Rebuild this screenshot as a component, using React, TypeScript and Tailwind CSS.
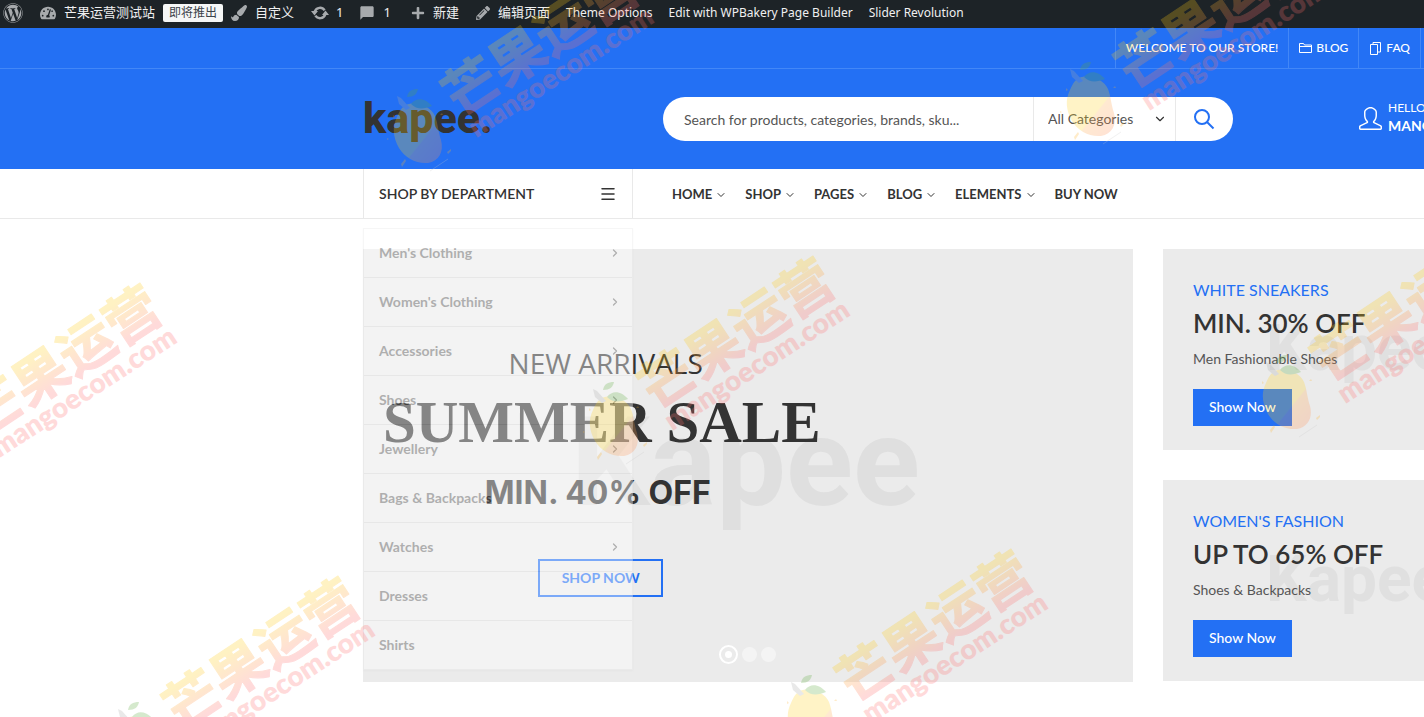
import {
  FaWordpress,
  FaTachometerAlt,
  FaPaintBrush,
  FaPlus,
  FaPencilAlt,
} from "react-icons/fa";
import { MdModeComment } from "react-icons/md";
import { SlUser } from "react-icons/sl";
import { ChevronDown, ChevronRight, Menu } from "lucide-react";

const departments = [
  { name: "Men's Clothing", hasChildren: true },
  { name: "Women's Clothing", hasChildren: true },
  { name: "Accessories", hasChildren: true },
  { name: "Shoes", hasChildren: true },
  { name: "Jewellery", hasChildren: true },
  { name: "Bags & Backpacks", hasChildren: false },
  { name: "Watches", hasChildren: true },
  { name: "Dresses", hasChildren: false },
  { name: "Shirts", hasChildren: false },
];

const navItems = [
  { name: "HOME", hasChildren: true },
  { name: "SHOP", hasChildren: true },
  { name: "PAGES", hasChildren: true },
  { name: "BLOG", hasChildren: true },
  { name: "ELEMENTS", hasChildren: true },
  { name: "BUY NOW", hasChildren: false },
];

const banners = [
  {
    label: "WHITE SNEAKERS",
    title: "MIN. 30% OFF",
    text: "Men Fashionable Shoes",
  },
  {
    label: "WOMEN'S FASHION",
    title: "UP TO 65% OFF",
    text: "Shoes & Backpacks",
  },
];

const stamps = [
  [-196, -293],
  [477, -320],
  [-673, 27],
  [0, 0],
  [673, -27],
  [-475, 320],
  [198, 293],
];

const UpdateIcon = () => (
  <svg
    viewBox="0 0 20 20"
    className="size-5 text-[#a7aaad]"
    aria-hidden="true"
  >
    <path
      d="M4.800 8.500a5.500 5.500 0 0 1 9.800-1.200M15.200 11.500a5.500 5.500 0 0 1-9.800 1.200"
      fill="none"
      stroke="currentColor"
      strokeWidth="2.400"
    />
    <path d="M1 8h7l-3.500 4.500zM19 12h-7l3.500-4.500z" fill="currentColor" />
  </svg>
);

const AdminBar = () => {
  return (
    <nav
      aria-label="Admin"
      className="flex h-7 items-center whitespace-nowrap bg-[#1d2327] pb-[3px] font-['Noto_Sans','Noto_Sans_CJK_SC',sans-serif] text-[13px] text-[#f0f0f1]"
    >
      <a href="#" aria-label="WordPress" className="ml-[3px] text-[#a7aaad]">
        <FaWordpress className="size-5" />
      </a>
      <a href="#" className="ml-[17px] flex items-center gap-2">
        <FaTachometerAlt className="size-4 text-[#a7aaad]" />
        芒果运营测试站
      </a>
      <a
        href="#"
        className="ml-2 flex h-[18px] items-center rounded-xs bg-[#f6f7f7] px-1.5 text-xs text-[#3c434a]"
      >
        即将推出
      </a>
      <a href="#" className="ml-2 flex items-center gap-2">
        <FaPaintBrush className="size-4 text-[#a7aaad]" />
        自定义
      </a>
      <a href="#" className="ml-4 flex items-center gap-1.5">
        <UpdateIcon />1
      </a>
      <a href="#" className="ml-4 flex items-center gap-2">
        <MdModeComment className="size-4 -scale-x-100 text-[#a7aaad]" />1
      </a>
      <a href="#" className="ml-5 flex items-center gap-2">
        <FaPlus className="size-3.5 text-[#a7aaad]" />
        新建
      </a>
      <a href="#" className="ml-[17px] flex items-center gap-2">
        <FaPencilAlt className="size-3.5 text-[#a7aaad]" />
        编辑页面
      </a>
      <div className="ml-4 flex gap-4 text-xs">
        <a href="#">Theme Options</a>
        <a href="#">Edit with WPBakery Page Builder</a>
        <a href="#">Slider Revolution</a>
      </div>
    </nav>
  );
};

const FolderIcon = () => (
  <svg
    viewBox="0 0 13 13"
    className="size-[13px]"
    fill="none"
    stroke="currentColor"
    aria-hidden="true"
  >
    <path d="M.5 10.5v-9h4l1 1.5h7v7.5zM.5 4.5h12" />
  </svg>
);

const PagesIcon = () => (
  <svg
    viewBox="0 0 13 13"
    className="size-[13px]"
    fill="none"
    stroke="currentColor"
    aria-hidden="true"
  >
    <path d="M1.500 2.500h7v10h-7zM4 2.500V.5h7.500v9.500H9" />
  </svg>
);

const TopBar = () => {
  return (
    <div className="flex h-[41px] justify-end border-b border-[#4287f7] bg-[#2370f4] pr-[3px] text-xs font-medium text-white">
      <span className="flex items-center border-l border-[#4287f7] px-2.5">
        WELCOME TO OUR STORE!
      </span>
      <a
        href="#"
        className="flex items-center gap-1 border-l border-[#4287f7] px-2.5"
      >
        <FolderIcon />
        BLOG
      </a>
      <a
        href="#"
        className="flex items-center gap-1 border-x border-[#4287f7] px-2.5"
      >
        <PagesIcon />
        FAQ
      </a>
    </div>
  );
};

const Header = () => {
  return (
    <header className="flex h-[100px] items-center overflow-hidden bg-[#2370f4] pl-[363px]">
      <a
        href="#"
        className="w-[300px] shrink-0 pb-0.5 font-[Roboto,sans-serif] text-[43px] leading-[52px] font-extrabold text-[#333]"
      >
        kapee.
      </a>
      <form className="flex h-11 min-w-0 flex-1 overflow-hidden rounded-full bg-white text-sm text-[#555]">
        <input
          type="text"
          aria-label="Search"
          placeholder="Search for products, categories, brands, sku..."
          className="min-w-0 flex-1 pt-0.5 pl-[21px] outline-none placeholder:text-[#555]"
        />
        <div className="relative flex w-[143px] items-center border-x border-[#e9e9e9]">
          <select
            aria-label="Category"
            className="size-full cursor-pointer appearance-none pl-3.5 outline-none"
          >
            <option>All Categories</option>
          </select>
          <ChevronDown
            className="pointer-events-none absolute right-2 size-3.5 text-[#333]"
            strokeWidth={2}
          />
        </div>
        <button
          type="button"
          aria-label="Submit search"
          className="flex w-[57px] items-center justify-center pr-0.5 text-[#2370f4]"
        >
          <svg
            viewBox="0 0 22 22"
            className="size-[22px]"
            fill="none"
            stroke="currentColor"
            strokeWidth="2"
          >
            <circle cx="9" cy="9" r="7" />
            <path d="M14 14l6.500 6.500" />
          </svg>
        </button>
      </form>
      <a
        href="#"
        className="ml-[126px] flex w-[65px] shrink-0 items-center gap-1.5 overflow-hidden pb-0.5 whitespace-nowrap text-white"
      >
        <SlUser className="size-[23px] shrink-0" />
        <span className="flex flex-col">
          <span className="text-xs leading-4">HELLO, MANGO</span>
          <span className="text-sm leading-5 font-bold">MANGO</span>
        </span>
      </a>
    </header>
  );
};

const DepartmentMenu = () => {
  return (
    <ul className="absolute top-[59px] -left-px z-10 w-[270px] border border-[#e9e9e9] bg-white opacity-40 shadow-xs">
      {departments.map((item) => (
        <li
          key={item.name}
          className="border-b border-[#e2e2e2] last:border-b-0"
        >
          <a
            href="#"
            className="flex h-12 items-center justify-between px-[15px] text-sm font-bold text-[#555]"
          >
            {item.name}
            {item.hasChildren && (
              <ChevronRight className="-mr-1 size-3" strokeWidth={2.5} />
            )}
          </a>
        </li>
      ))}
    </ul>
  );
};

const MainNav = () => {
  return (
    <div className="flex h-[50px] border-b border-[#e9e9e9] bg-white pl-[363px] text-[#333]">
      <div className="relative w-[270px] shrink-0 border-x border-[#e9e9e9]">
        <button
          type="button"
          className="flex size-full items-center justify-between px-[15px] text-sm font-semibold"
        >
          SHOP BY DEPARTMENT
          <Menu className="size-[18px]" />
        </button>
        <DepartmentMenu />
      </div>
      <nav
        aria-label="Main"
        className="ml-[39px] flex items-center gap-[18px] pt-0.5 text-[13px] font-bold"
      >
        {navItems.map((item) => (
          <a
            key={item.name}
            href="#"
            className="flex items-center gap-[3px] whitespace-nowrap"
          >
            {item.name}
            {item.hasChildren && <ChevronDown className="size-3" />}
          </a>
        ))}
      </nav>
    </div>
  );
};

const Slider = () => {
  return (
    <section className="relative h-[433px] min-w-0 flex-1 overflow-hidden bg-[#ebebeb]">
      <span className="absolute top-36 left-[208px] font-[Roboto,sans-serif] text-[124px] leading-[140px] font-bold text-[#dfdfdf]">
        Kapee
      </span>
      <div className="relative flex w-[62%] flex-col items-center pt-24 whitespace-nowrap text-[#333]">
        <p className="ml-2 font-['Open_Sans',sans-serif] text-[28px] leading-9">
          NEW ARRIVALS
        </p>
        <h1 className="font-['Liberation_Serif',serif] text-[59px] leading-[82px] font-bold">
          SUMMER SALE
        </h1>
        <h2 className="mt-2.5 pr-2 font-[Inter,sans-serif] text-[32px] leading-10 font-bold">
          MIN. 40% OFF
        </h2>
        <a
          href="#"
          className="mt-[46px] mr-0.5 flex h-[38px] w-[125px] items-center justify-center border-2 border-[#2370f4] text-sm font-bold text-[#2370f4]"
        >
          SHOP NOW
        </a>
      </div>
      <div className="absolute bottom-[18px] left-0 flex w-full items-center justify-center gap-1 pr-0.5">
        <button
          type="button"
          aria-label="Slide 1"
          className="flex size-[19px] items-center justify-center rounded-full border-2 border-white"
        >
          <span className="size-[7px] rounded-full bg-white" />
        </button>
        <button
          type="button"
          aria-label="Slide 2"
          className="size-[15px] rounded-full bg-[#f4f4f4]"
        />
        <button
          type="button"
          aria-label="Slide 3"
          className="size-[15px] rounded-full bg-[#f4f4f4]"
        />
      </div>
    </section>
  );
};

const Banner = ({
  label,
  title,
  text,
}: {
  label: string;
  title: string;
  text: string;
}) => {
  return (
    <article className="relative h-[201px] overflow-hidden bg-[#ebebeb] px-[30px] pt-[29px] whitespace-nowrap">
      <span className="absolute top-16 left-[103px] font-[Roboto,sans-serif] text-[64px] leading-[72px] font-bold text-[#e0e0e0]">
        Kapee
      </span>
      <div className="relative flex flex-col items-start">
        <p className="text-base leading-6 text-[#2370f4]">{label}</p>
        <h3 className="mt-[3px] text-[26px] leading-9 font-semibold text-[#333]">
          {title}
        </h3>
        <p className="mt-2 text-sm leading-5 text-[#555]">{text}</p>
        <a
          href="#"
          className="mt-5 flex h-[37px] items-center bg-[#2370f4] px-4 pb-0.5 text-sm font-medium text-white"
        >
          Show Now
        </a>
      </div>
    </article>
  );
};

const Watermark = () => {
  return (
    <svg
      aria-hidden="true"
      className="pointer-events-none absolute inset-0 z-20 size-full opacity-25"
    >
      <defs>
        <linearGradient id="brand" x1="0" y1="0" x2="0" y2="1">
          <stop offset="0.3" stopColor="#ffcc14" />
          <stop offset="0.8" stopColor="#ff7070" />
        </linearGradient>
        <linearGradient id="fruit" x1="0" y1="0" x2="1" y2="1">
          <stop offset="0.6" stopColor="#ffd21f" />
          <stop offset="0.62" stopColor="#ffab4a" />
          <stop offset="1" stopColor="#ff8a5c" />
        </linearGradient>
      </defs>
      {stamps.map(([x, y]) => (
        <g key={`${x},${y}`} transform={`translate(${x} ${y})`}>
          <path
            d="M605 397c10-2 22 3 26 12 3 8 3 15 6 24 3 12-2 21-13 23-12 1-23-5-29-15-6-11-7-21-2-31 3-7 6-12 12-13z"
            fill="url(#fruit)"
          />
          <path d="M593 389l4 2 9 10-4 2-7-6z" fill="#a9a9a9" />
          <path d="M603 390c1-6 5-8 11-8-1 5-4 8-11 8z" fill="#5cab3c" />
          <path d="M607 397c6-8 15-5 21 2-8 3-15 4-21-2z" fill="#5cab3c" />
          <path
            d="M597 457l4-5 1 2-4 6zM589 408l2 2-2 1zM636 408l2-2 1 2zM643 445l4-3v2l-3 3zM583 431l2 1-2 1z"
            fill="#ffb52e"
          />
          <path
            d="M626 464l18-12"
            stroke="#c9c9c9"
            strokeWidth="1"
            fill="none"
          />
          <text
            transform="translate(737 335) rotate(-33.5)"
            y="19"
            textAnchor="middle"
            fontSize="55"
            fontWeight="700"
            fill="url(#brand)"
            stroke="url(#brand)"
            strokeWidth="1"
            strokeLinejoin="round"
            className="font-['Noto_Sans_CJK_SC',sans-serif]"
          >
            芒果运营
          </text>
          <text
            transform="translate(762 373) rotate(-33)"
            textAnchor="middle"
            fontSize="28"
            fontWeight="800"
            fill="#ff7070"
            className="font-[Lato,sans-serif]"
          >
            mangoecom.com
          </text>
        </g>
      ))}
    </svg>
  );
};

const App = () => {
  return (
    <div className="relative min-h-screen overflow-hidden bg-white font-[Lato,sans-serif]">
      <AdminBar />
      <TopBar />
      <Header />
      <MainNav />
      <main className="flex gap-[30px] pt-[30px] pb-[35px] pl-[363px]">
        <Slider />
        <aside className="flex w-[261px] shrink-0 flex-col gap-[30px]">
          {banners.map((banner) => (
            <Banner key={banner.label} {...banner} />
          ))}
        </aside>
      </main>
      <Watermark />
    </div>
  );
};

export default App;
